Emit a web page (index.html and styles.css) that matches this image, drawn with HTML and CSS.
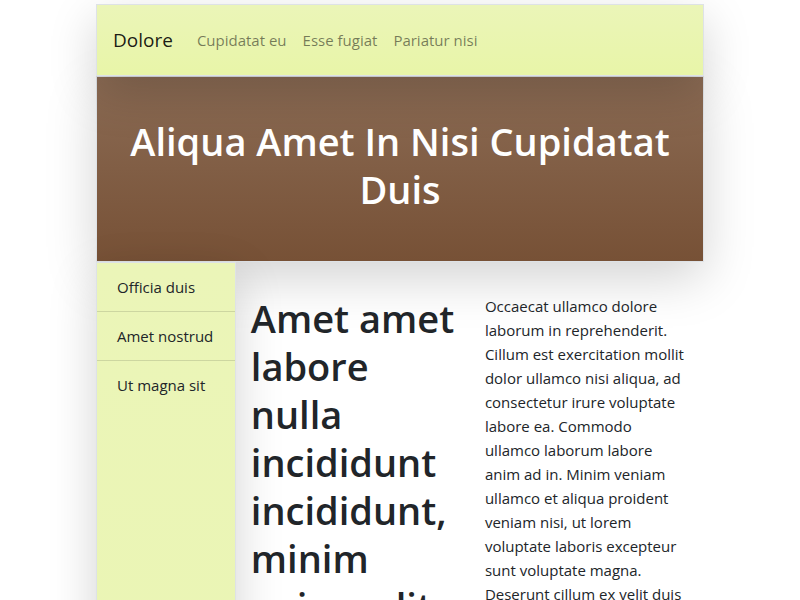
FILE: index.html
```html
<!DOCTYPE html>
<html lang="en">
<head>
<meta charset="utf-8">
<meta name="viewport" content="width=device-width, initial-scale=1">
<title>Dolore</title>
<link rel="stylesheet" href="styles.css">
</head>
<body>
<div class="page">
  <nav class="navbar panel">
    <a class="brand" href="#">Dolore</a>
    <ul class="nav-links">
      <li><a href="#">Cupidatat eu</a></li>
      <li><a href="#">Esse fugiat</a></li>
      <li><a href="#">Pariatur nisi</a></li>
    </ul>
  </nav>
  <header class="hero panel">
    <h1>Aliqua Amet In Nisi Cupidatat Duis</h1>
  </header>
  <div class="body-row">
    <aside class="sidebar panel">
      <ul>
        <li><a href="#">Officia duis</a></li>
        <li><a href="#">Amet nostrud</a></li>
        <li><a href="#">Ut magna sit</a></li>
      </ul>
    </aside>
    <main class="content">
      <h1>Amet amet labore nulla incididunt incididunt, minim enim velit</h1>
      <p>Occaecat ullamco dolore laborum in reprehenderit. Cillum est exercitation mollit dolor ullamco nisi aliqua, ad consectetur irure voluptate labore ea. Commodo ullamco laborum labore anim ad in. Minim veniam ullamco et aliqua proident veniam nisi, ut lorem voluptate laboris excepteur sunt voluptate magna. Deserunt cillum ex velit duis</p>
    </main>
  </div>
</div>
</body>
</html>
```
FILE: styles.css
```css
* {
  box-sizing: border-box;
}

body {
  margin: 0;
  background: #fff;
  color: #212529;
  font-family: "Segoe UI", "Open Sans", "Noto Sans", sans-serif;
  font-size: 15px;
  line-height: 24px;
}

a {
  color: inherit;
  text-decoration: none;
}

ul {
  list-style: none;
  margin: 0;
  padding: 0;
}

h1 {
  margin: 0 0 8px;
  font-size: 38px;
  font-weight: 600;
  line-height: 48px;
}

.page {
  width: 76%;
  margin: 0 auto;
  padding-top: 4px;
}

.panel {
  border: 1px solid #dee2e6;
  box-shadow: 0 16px 48px rgba(0, 0, 0, 0.175);
}

.navbar {
  position: relative;
  display: flex;
  align-items: center;
  gap: 24px;
  padding: 16px;
  background: linear-gradient(#ebf5b8, #e8f5a8);
}

.brand {
  font-size: 19px;
  line-height: 38px;
  color: rgba(0, 0, 0, 0.9);
}

.nav-links {
  display: flex;
  gap: 16px;
  color: rgba(0, 0, 0, 0.5);
}

.hero {
  padding: 40px 32px;
  background: linear-gradient(#8b6b54, #775136);
  color: #fff;
  text-align: center;
}

.body-row {
  display: flex;
  min-height: 300vh;
}

.sidebar {
  flex: 0 0 23%;
  background: linear-gradient(#ebf5b8, #e8f5a8);
}

.sidebar li + li {
  border-top: 1px solid rgba(0, 0, 0, 0.125);
}

.sidebar a {
  display: block;
  padding: 12px 20px;
  white-space: nowrap;
}

.content {
  flex: 1;
  display: grid;
  grid-template-columns: 1fr 1fr;
  gap: 30px;
  padding: 32px 15px;
}

.content p {
  margin: 0;
}
```
